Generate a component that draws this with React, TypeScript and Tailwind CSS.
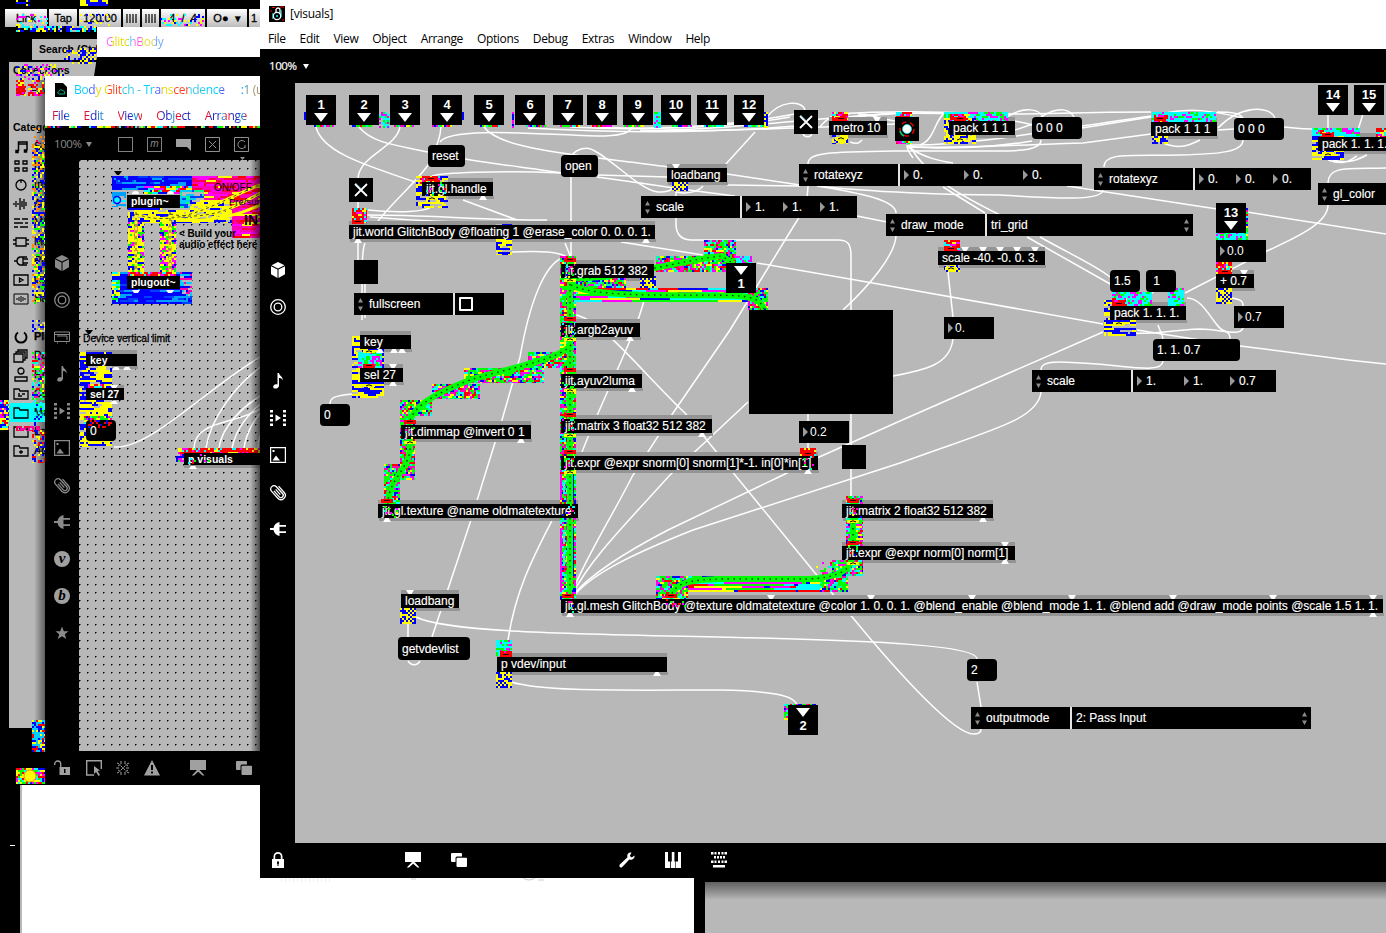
import React from "react";

type Box = [number, number, number, number];

const ALL = ["#ff0000", "#00ff00", "#0000ff", "#ffff00", "#ff00ff", "#00ffff"];
const MULTI = [...ALL, "#00ff00", "#00ff00", "#ff00b4", "#00ffb4"];
const YB = ["#ffff00", "#ffff00", "#0000ff", "#ffff00", "#0000ff", "#b8b8b8"];
const CHECK = ["#ffff00", "#0000ff"];
const BLUE = ["#0000ff", "#0000ff", "#0000ff", "#0000ff", "#0040ff", "#00a0ff"];
const PINK = ["#ff00b4", "#ff0050", "#ff00ff", "#ff0000", "#ff00b4", "#ffff00"];
const RED = ["#ff0000", "#ff0000", "#ff0000", "#ffff00", "#ff00ff", "#00ffff"];
const CYAN = ["#00ffff", "#00ffff", "#00ffff", "#ff00ff", "#00ff00"];
const ROWS = ["#ff0000", "#ffff00", "#0000ff", "#00ffff", "#ff00ff", "#00ff00"];

function Noise({ b, p = MULTI, run = 0.2, density = 1, cell = 2 }: { b: Box; p?: string[]; run?: number; density?: number; cell?: number }) {
  const [x, y, w, h] = b;
  let s = (x * 7919 + y * 104729 + w * 31 + h) >>> 0;
  const rnd = () => {
    s = (Math.imul(s, 1664525) + 1013904223) >>> 0;
    return s / 4294967296;
  };
  rnd();
  const d: Record<string, string> = {};
  for (let j = 0; j < h; j += cell) {
    let last = p[Math.floor(rnd() * p.length)];
    for (let i = 0; i < w; i += cell) {
      if (p === CHECK) last = CHECK[((i + j) / cell + (rnd() < 0.25 ? 1 : 0)) % 2 | 0];
      else if (rnd() > run) last = p[Math.floor(rnd() * p.length)];
      if (rnd() > density) continue;
      d[last] = (d[last] || "") + `M${x + i} ${y + j}h${Math.min(cell, w - i)}v${Math.min(cell, h - j)}h-${Math.min(cell, w - i)}z`;
    }
  }
  return (
    <g shapeRendering="crispEdges">
      {Object.keys(d).map((c) => (
        <path key={c} fill={c} d={d[c]} />
      ))}
    </g>
  );
}

const at = (x: number, y: number, w?: number, h?: number) => ({ left: x, top: y, width: w, height: h });

function Obj({ b, t, small }: { b: Box; t: string; small?: boolean }) {
  return (
    <div
      className={
        "absolute bg-black pl-1 whitespace-pre text-white " +
        (small ? "text-[10.5px] leading-[12px] font-bold" : "text-[12px] leading-[14px] [-webkit-text-stroke:0.15px_white]")
      }
      style={at(...b)}
    >
      {t}
    </div>
  );
}

function Msg({ b, t }: { b: Box; t: string }) {
  return (
    <div className="absolute flex items-center rounded-[4px] bg-black pl-1 text-[12px] leading-[14px] whitespace-pre text-white [-webkit-text-stroke:0.15px_white]" style={at(...b)}>
      {t}
    </div>
  );
}

function Tri() {
  return (
    <svg className="mr-[2px] h-[10px] w-[5px] shrink-0" viewBox="0 0 5 10">
      <path d="M0 0L5 5L0 10z" fill="#9a9a9a" />
    </svg>
  );
}

function Num({ b, t }: { b: Box; t: string }) {
  return (
    <div className="absolute flex items-center bg-black pl-1 text-[12px] leading-[14px] text-white" style={at(...b)}>
      <Tri />
      {t}
    </div>
  );
}

function Port({ x, y, t, out }: { x: number; y: number; t: string; out?: boolean }) {
  const tri = (
    <svg className="h-[9px] w-[14px]" viewBox="0 0 14 9">
      <path d="M0 0H14L7 9z" fill="#fff" />
    </svg>
  );
  return (
    <div className="absolute flex h-[30px] w-[30px] flex-col items-center justify-between bg-black py-[3px] text-[13px] leading-[13px] font-bold text-white" style={at(x, y)}>
      {out ? tri : <span>{t}</span>}
      {out ? <span>{t}</span> : tri}
    </div>
  );
}

function Spin() {
  return (
    <svg className="h-[13px] w-[5px] shrink-0" viewBox="0 0 5 13">
      <path d="M0 4.500L2.500 0L5 4.500zM0 8.500L2.500 13L5 8.500z" fill="#8a8a8a" />
    </svg>
  );
}

function Attr({ x, y, w, name, vals, gaps, menu, check }: { x: number; y: number; w: number; name: string; vals?: string[]; gaps?: number[]; menu?: string; check?: boolean }) {
  return (
    <div className="absolute flex h-[22px] items-stretch text-[12px] text-white [-webkit-text-stroke:0.15px_white]" style={at(x, y, w)}>
      <div className="flex w-[99px] shrink-0 items-center gap-[6px] bg-black pl-1">
        <Spin />
        {name}
      </div>
      <div className="w-[2px] shrink-0 bg-[#e4e4e4]" />
      <div className="flex min-w-0 flex-1 items-center bg-black pl-1">
        {vals?.map((v, i) => (
          <span key={i} className="flex shrink-0 items-center gap-[2px]" style={{ width: gaps ? gaps[i] : 37 }}>
            <Tri />
            {v}
          </span>
        ))}
        {menu && (
          <>
            <span className="flex-1">{menu}</span>
            <span className="mr-1 flex">
              <Spin />
            </span>
          </>
        )}
        {check && <span className="h-[14px] w-[14px] rounded-[1px] border-2 border-white" />}
      </div>
    </div>
  );
}

function Toggle({ x, y }: { x: number; y: number }) {
  return (
    <svg className="absolute h-6 w-6 bg-black" style={at(x, y)} viewBox="0 0 24 24">
      <path d="M6 6L18 18M18 6L6 18" stroke="#fff" strokeWidth="1.800" />
      <path d="M6.500 5L12.500 11" stroke="#6cf" strokeWidth=".7" />
    </svg>
  );
}

const wires = [
  "M316 127C322 152 365 165 415 182",
  "M359 127C372 143 395 145 428 152M465 159C500 165 540 169 562 173M597 177L640 183C700 192 720 194 735 196M857 216L887 222",
  "M400 127C396 148 360 155 358 178M358 202V212",
  "M441 127C440 142 434 150 428 165C418 180 395 200 378 221",
  "M440 142C450 125 560 136 605 136C625 135 630 132 632 127",
  "M484 127C500 150 580 155 668 167M727 174L800 185",
  "M817 186C870 192 950 195 1000 195C1050 198 1102 202 1103 190",
  "M528 128C600 132 700 134 795 126",
  "M570 127C640 131 730 128 790 117",
  "M600 127C670 131 740 124 795 114M640 130C700 132 820 118 895 113M660 131C740 131 800 128 895 124",
  "M755 132L725 165",
  "M767 117C780 100 802 100 805 110M803 134C805 138 812 138 812 132",
  "M572 155C577 149 587 146 593 150C613 160 640 190 658 192C668 192 672 190 672 188",
  "M432 176C440 173 500 170 561 173M597 175L668 177M727 185L800 186",
  "M571 177V260M565 243L571 258",
  "M512 252C540 251 560 251 568 258",
  "M368 210C400 213 425 212 431 207M367 215C430 215 480 220 547 220M463 200L517 220M370 217C430 222 500 224 560 224",
  "M621 242L703 255M757 263L867 282L1103 324M1137 330L1200 340M1240 346C1290 352 1340 360 1386 364",
  "M808 164C808 152 830 152 900 151H1000C1020 151 1041 150 1041 140",
  "M808 186C807 210 800 215 790 232L730 330L673 413L633 475C610 520 590 550 572 592",
  "M817 186C860 193 896 200 896 213M896 236C895 255 870 285 843 310M748 402L670 475C620 530 590 560 572 595",
  "M676 192V224C676 236 682 240 692 240H838C848 240 851 244 851 256V445M851 469V498",
  "M676 192C690 195 700 190 703 186",
  "M648 283C640 330 610 380 582 452C560 520 520 560 508 640",
  "M1104 167C1104 152 1130 156 1180 155C1220 154 1243 152 1243 140",
  "M1067 186L1217 209M1247 212L1386 234",
  "M907 145C907 150 910 154 913 158M943 187L985 213M1027 237L1112 285",
  "M909 145C930 180 960 195 1000 215M1040 237C1070 254 1095 265 1110 277",
  "M908 147C925 158 940 161 953 163M907 146C940 150 990 148 1032 141M920 145C935 140 935 118 945 113",
  "M910 147C960 148 1020 145 1083 143L1151 134M910 145C970 146 1050 130 1151 116",
  "M834 114C900 110 940 112 1007 114C1050 114 1080 112 1151 112M850 118C900 110 980 112 1033 125",
  "M1007 117C1025 105 1040 110 1043 117M1041 117C1060 105 1070 110 1074 117M1082 128L1151 117M1000 135L1033 124",
  "M850 142C858 145 860 142 862 140M820 127C830 114 840 113 850 114M858 114C870 113 870 117 895 121",
  "M1163 143C1180 150 1190 145 1200 140M1218 128C1240 105 1270 105 1275 118M1217 112C1232 112 1240 113 1243 118M1165 113C1190 108 1210 110 1243 118M1218 130L1234 129M1283 127C1295 128 1300 129 1313 129",
  "M1328 114V130M1363 114L1358 130M1333 160C1350 165 1360 158 1367 155M1328 160C1345 166 1350 160 1357 156",
  "M1328 183C1328 165 1350 169 1386 168M1328 205C1328 225 1290 240 1265 252L1185 293",
  "M1232 298C1243 300 1243 302 1243 306M1243 328C1240 337 1220 329 1200 329C1170 330 1150 335 1133 333",
  "M1187 298C1205 298 1215 330 1225 331C1230 333 1230 336 1230 340M1158 325C1160 332 1163 334 1163 340",
  "M1130 300L1137 304M1155 290L1150 295",
  "M1163 361C1162 376 1120 363 1060 362C1045 362 1041 365 1041 370M1041 392C1038 420 990 430 900 463L693 530C630 555 590 575 573 597",
  "M1103 332L1000 377L900 421L817 458L783 475L668 530C620 555 590 575 573 595",
  "M948 272L953 317M953 339C950 365 925 370 893 376",
  "M808 414V421M808 443V450",
  "M575 315C600 318 640 370 685 413L735 475L815 573L853 618C900 675 955 735 974 734C980 734 981 731 981 729",
  "M977 682L981 707M416 617C450 634 600 634 760 638C870 641 977 645 977 659",
  "M408 622V637M432 637L440 613L470 523L502 420L520 357C530 300 545 265 562 258M408 661C412 667 418 665 420 661",
  "M511 682C545 692 620 690 720 690C770 691 796 695 797 706",
  "M365 243C362 250 362 260 362 320M358 243V260M365 284V318M352 394C335 396 330 397 330 404",
];

const cables = [
  "M570 260V590",
  "M571 285C600 300 700 293 740 296C755 298 760 300 764 309",
  "M571 278C620 280 680 260 722 256L734 264",
  "M571 345C560 360 500 370 470 380C430 395 411 410 410 422V450C408 470 388 480 388 504",
  "M853 498V552C853 570 840 577 810 579H720C690 580 676 582 671 596",
];

const blocks: { b: Box; p?: string[]; run?: number; density?: number }[] = [
  { b: [560, 256, 16, 344] },
  { b: [576, 288, 192, 14], p: ROWS, run: 0.93 },
  { b: [576, 276, 50, 12] },
  { b: [656, 256, 80, 16] },
  { b: [704, 240, 32, 16] },
  { b: [736, 256, 16, 8], p: CYAN },
  { b: [748, 288, 20, 22] },
  { b: [640, 276, 16, 12], p: CHECK },
  { b: [528, 352, 34, 16] },
  { b: [464, 368, 80, 15] },
  { b: [432, 384, 48, 15] },
  { b: [400, 400, 32, 16] },
  { b: [400, 416, 15, 64] },
  { b: [384, 464, 16, 48] },
  { b: [846, 496, 17, 80] },
  { b: [832, 560, 24, 16] },
  { b: [656, 576, 32, 24] },
  { b: [688, 576, 144, 16], p: ROWS, run: 0.93 },
  { b: [820, 576, 28, 16] },
  { b: [816, 560, 16, 16], density: 0.35 },
  { b: [352, 336, 32, 62], p: YB, run: 0.65 },
  { b: [358, 352, 24, 16], p: CYAN },
  { b: [416, 176, 32, 32], p: YB, run: 0.6 },
  { b: [420, 176, 20, 8], p: RED },
  { b: [352, 208, 15, 15], p: RED },
  { b: [496, 224, 16, 31], p: YB, run: 0.6 },
  { b: [672, 182, 16, 9], p: CHECK },
  { b: [832, 112, 16, 11], p: RED },
  { b: [832, 135, 16, 9], p: YB },
  { b: [896, 112, 16, 5], p: RED },
  { b: [896, 141, 16, 3] },
  { b: [944, 112, 64, 10], p: CYAN },
  { b: [944, 118, 32, 26], p: YB },
  { b: [950, 114, 20, 8], p: RED },
  { b: [1152, 112, 64, 11], p: CYAN },
  { b: [1154, 115, 14, 8], p: RED },
  { b: [1152, 136, 16, 8], p: YB },
  { b: [1312, 128, 48, 11], p: CYAN },
  { b: [1376, 128, 10, 9], p: RED },
  { b: [1312, 136, 32, 24], p: YB, run: 0.6 },
  { b: [1320, 130, 14, 8], p: RED },
  { b: [944, 240, 16, 11], p: RED },
  { b: [944, 264, 16, 8], p: YB },
  { b: [1216, 232, 32, 8], p: CYAN },
  { b: [1246, 208, 2, 32] },
  { b: [1216, 262, 16, 12], p: RED },
  { b: [1216, 288, 16, 16], p: CHECK },
  { b: [1104, 300, 32, 36], p: YB, run: 0.6 },
  { b: [1112, 292, 40, 14], p: CYAN },
  { b: [1112, 298, 15, 8], p: RED },
  { b: [1168, 288, 16, 18], p: CYAN },
  { b: [800, 448, 16, 8], p: RED },
  { b: [400, 608, 16, 16], p: CHECK },
  { b: [496, 640, 16, 16], p: CYAN },
  { b: [500, 651, 12, 5], p: RED },
  { b: [496, 672, 16, 16], p: CHECK },
  { b: [784, 704, 32, 16] },
  { b: [379, 112, 11, 16], p: CYAN, density: 0.7 },
  { b: [304, 112, 2, 8], p: ["#0000ff"] },
  { b: [462, 112, 2, 8], p: ["#0000ff"] },
  { b: [512, 112, 2, 16], p: ["#0000ff", "#ff00ff"] },
  { b: [654, 112, 7, 16], p: CYAN },
  { b: [764, 112, 4, 16], p: ["#ffff00", "#0000ff"] },
  ...[314, 352, 394, 432, 480, 526, 560, 592, 624, 672, 704, 744].map((x) => ({ b: [x, 125, 20, 2] as Box })),
];

const overlays: Box[] = [
  [562, 264, 13, 14], [562, 323, 13, 14], [562, 374, 13, 14], [562, 419, 13, 14], [562, 456, 13, 14],
  [403, 425, 12, 14], [384, 504, 14, 14], [848, 504, 14, 14], [848, 546, 14, 14], [564, 599, 10, 14],
  [662, 599, 24, 8], [426, 182, 20, 14], [804, 456, 12, 14], [562, 504, 13, 14],
];

const outlets: [number, number, boolean][] = [
  [483, 196, false], [646, 239, false], [358, 239, false], [630, 337, false], [632, 388, false], [702, 433, false], [808, 470, false],
  [521, 439, false], [387, 518, false], [983, 518, false], [1005, 560, false], [657, 672, false], [570, 613, false], [394, 349, false], [402, 349, false], [380, 349, false],
  [393, 382, false], [1373, 613, false],
  [676, 164, true], [877, 117, true], [965, 247, true], [983, 247, true], [1000, 247, true], [1017, 247, true], [1035, 247, true], [1244, 270, true],
  [393, 364, true], [410, 590, true], [771, 595, true], [871, 595, true], [972, 595, true], [1072, 595, true], [1173, 595, true], [1273, 595, true], [1373, 595, true], [1005, 542, true],
];

const objs: [Box, string][] = [
  [[422, 182, 71, 14], "jit.gl.handle"],
  [[349, 225, 306, 14], "jit.world GlitchBody @floating 1 @erase_color 0. 0. 0. 1."],
  [[667, 168, 60, 14], "loadbang"],
  [[829, 121, 58, 14], "metro 10"],
  [[949, 121, 66, 14], "pack 1 1 1"],
  [[1151, 122, 66, 14], "pack 1 1 1"],
  [[1318, 137, 80, 14], "pack 1. 1. 1."],
  [[938, 251, 107, 14], "scale -40. -0. 0. 3."],
  [[1216, 274, 38, 14], "+ 0.7"],
  [[1110, 306, 76, 14], "pack 1. 1. 1."],
  [[561, 264, 93, 14], "jit.grab 512 382"],
  [[561, 323, 79, 14], "jit.argb2ayuv"],
  [[561, 374, 81, 14], "jit.ayuv2luma"],
  [[561, 419, 151, 14], "jit.matrix 3 float32 512 382"],
  [[561, 456, 257, 14], "jit.expr @expr snorm[0] snorm[1]*-1. in[0]*in[1]"],
  [[842, 504, 151, 14], "jit.matrix 2 float32 512 382"],
  [[842, 546, 173, 14], "jit.expr @expr norm[0] norm[1]"],
  [[401, 425, 130, 14], "jit.dimmap @invert 0 1"],
  [[378, 504, 200, 14], "jit.gl.texture @name oldmatetexture"],
  [[561, 599, 822, 14], "jit.gl.mesh GlitchBody @texture oldmatetexture @color 1. 0. 0. 1. @blend_enable @blend_mode 1. 1. @blend add @draw_mode points @scale 1.5 1. 1."],
  [[401, 594, 58, 14], "loadbang"],
  [[497, 657, 170, 15], "p vdev/input"],
  [[360, 335, 51, 14], "key"],
  [[360, 368, 43, 14], "sel 27"],
];

const msgs: [Box, string][] = [
  [[428, 145, 37, 22], "reset"],
  [[561, 155, 37, 22], "open"],
  [[1032, 117, 50, 22], "0 0 0"],
  [[1234, 118, 50, 22], "0 0 0"],
  [[1110, 270, 30, 22], "1.5"],
  [[1146, 270, 30, 22], " 1"],
  [[1153, 339, 87, 22], "1. 1. 0.7"],
  [[320, 404, 30, 22], "0"],
  [[398, 637, 72, 23], "getvdevlist"],
  [[967, 659, 30, 22], "2"],
];

const nums: [Box, string][] = [
  [[944, 317, 50, 22], "0."],
  [[799, 421, 50, 22], "0.2"],
  [[1216, 240, 50, 22], "0.0"],
  [[1234, 306, 50, 22], "0.7"],
];

const ports = [306, 349, 390, 432, 474, 515, 553, 587, 623, 661, 697, 734];

const redInlets = [[570, 258], [570, 317], [570, 368], [570, 413], [570, 450], [410, 420], [387, 499], [853, 499], [853, 541], [568, 594], [671, 594], [358, 220], [431, 177], [841, 117], [960, 117], [1160, 117], [1328, 133], [951, 247], [1225, 270], [1119, 302], [808, 452], [506, 653], [369, 364]];
const yellowOutlets = [[570, 279], [570, 338], [570, 389], [570, 434], [570, 471], [369, 350], [369, 384], [432, 197], [841, 137], [960, 138], [1328, 153], [951, 267], [1119, 322], [410, 441], [853, 520], [853, 562]];

function PatchCanvas() {
  return (
    <div className="relative flex-1 overflow-hidden bg-[#b8b8b8]">
      <div className="absolute -top-[83px] -left-[295px] h-[933px] w-[1386px]">
        <svg className="absolute inset-0 h-full w-full" viewBox="0 0 1386 933">
          <g fill="none" stroke="#fff" strokeWidth="1.5">
            {wires.map((d, i) => (
              <path key={i} d={d} />
            ))}
          </g>
          {objs.map(([[x, y, w, h]], i) => (
            <path key={i} fill="#949494" d={`M${x} ${y - 4}h${w}v4h-${w}zM${x + 1} ${y + h}h${w}v3h-${w}z`} />
          ))}
          {blocks.map((k, i) => (
            <Noise key={i} {...k} />
          ))}
          <path d="M561 474V500M561 528V592" stroke="#f0f" strokeWidth="2" />
          <path d="M573 474V500M573 528V575" stroke="#00f" strokeWidth="2" />
          <path d="M564 480V500M564 530V575" stroke="#0ff" strokeWidth="2" strokeDasharray="14 8" />
          {cables.map((d, i) => (
            <g key={i} fill="none">
              <path d={d} stroke="#00ff00" strokeWidth="6" />
              <path d={d} stroke="#003000" strokeWidth="1.4" strokeDasharray="1.5 4.5" />
            </g>
          ))}
        </svg>
        {objs.map(([b, t], i) => (
          <Obj key={i} b={b} t={t} />
        ))}
        <svg className="absolute inset-0 h-full w-full" viewBox="0 0 1386 933">
          {overlays.map((b, i) => (
            <Noise key={i} b={b} density={0.22} />
          ))}
          {outlets.map(([x, y, top], i) => (
            <path key={i} fill="#fff" d={top ? `M${x - 4} ${y}h8l-2.5 4h-3z` : `M${x - 4} ${y + 4}h8l-2.5 -4h-3z`} />
          ))}
          {redInlets.map(([x, y]) => (
            <g key={x + "-" + y}>
              <path d={`M${x - 6} ${y}h12v4h-12z`} fill="#f00" />
              <path d={`M${x - 3} ${y + 1.5}h6`} stroke="#300" />
            </g>
          ))}
          {yellowOutlets.map(([x, y]) => (
            <g key={x + "-" + y}>
              <path d={`M${x - 6} ${y}h12v3h-12z`} fill="#ff0" />
              <path d={`M${x - 3} ${y + 2}q3 -2.5 6 0`} stroke="#000" fill="none" />
            </g>
          ))}
        </svg>
        {ports.map((x, i) => (
          <Port key={x} x={x} y={95} t={String(i + 1)} />
        ))}
        <Port x={1318} y={85} t="14" />
        <Port x={1354} y={85} t="15" />
        <Port x={1216} y={203} t="13" />
        <Port x={726} y={263} t="1" out />
        <Port x={788} y={705} t="2" out />
        {msgs.map(([b, t], i) => (
          <Msg key={i} b={b} t={t} />
        ))}
        {nums.map(([b, t], i) => (
          <Num key={i} b={b} t={t} />
        ))}
        <Attr x={641} y={196} w={216} name="scale" vals={["1.", "1.", "1."]} />
        <Attr x={799} y={164} w={283} name="rotatexyz" vals={["0.", "0.", "0."]} gaps={[60, 59, 50]} />
        <Attr x={1094} y={168} w={217} name="rotatexyz" vals={["0.", "0.", "0."]} />
        <Attr x={886} y={214} w={307} name="draw_mode" menu="tri_grid" />
        <Attr x={1318} y={183} w={120} name="gl_color" />
        <Attr x={1032} y={370} w={244} name="scale" vals={["1.", "1.", "0.7"]} gaps={[47, 46, 40]} />
        <Attr x={354} y={293} w={150} name="fullscreen" check />
        <Attr x={971} y={707} w={340} name="outputmode" menu="2: Pass Input" />
        <Toggle x={349} y={178} />
        <Toggle x={794} y={110} />
        <svg className="absolute h-6 w-6 bg-black" style={at(895, 117)} viewBox="0 0 24 24">
          <circle cx="12" cy="12" r="7" fill="none" stroke="#d00" strokeWidth="1.6" strokeDasharray="5 4" />
          <path d="M5 14a7 7 0 0 0 4 5" stroke="#0c6" strokeWidth="1.5" fill="none" />
          <circle cx="12" cy="12" r="4.5" fill="#fff" stroke="#0ff" strokeWidth=".7" />
        </svg>
        <div className="absolute bg-black" style={at(354, 260, 24, 24)} />
        <div className="absolute bg-black" style={at(842, 445, 24, 24)} />
        <div className="absolute bg-black" style={at(749, 310, 144, 104)} />
      </div>
    </div>
  );
}

const icons: Record<string, React.ReactNode> = {
  cube: <path fill="currentColor" d="M8 0L14.5 3.2L8 6.5L1.500 3.2zM1 4.200L7.500 7.500V16L1 12.300zM15 4.200L8.500 7.500V16L15 12.300z" />,
  target: (
    <g fill="none" stroke="currentColor" strokeWidth="1.3">
      <circle cx="8" cy="8" r="7.300" />
      <circle cx="8" cy="8" r="3.800" />
    </g>
  ),
  panel: <path fill="none" stroke="currentColor" strokeWidth="1" d="M.5 3h15v9.500h-15zM.5 5.500h15M3 7h10v4M3 14h1M12 14h1" />,
  note: <path fill="currentColor" d="M7.500 0H9C9.200 2.500 13 3.500 12.800 7.500C12 5.500 10.500 5 9 5V12.500C9 14.800 6.500 16 4.600 15.500C2.500 14.800 3 12.300 5 11.500C6 11 7 11.100 7.500 11.400z" />,
  film: <path fill="currentColor" d="M0 0h3v2.500H0zM0 4.500h3V7H0zM0 9h3v2.500H0zM0 13.500h3V16H0zM13 0h3v2.500h-3zM13 4.500h3V7h-3zM13 9h3v2.500h-3zM13 13.500h3V16h-3zM5.500 4.500L11 8L5.500 11.500z" />,
  image: (
    <>
      <path fill="none" stroke="currentColor" strokeWidth="1.200" d="M.6.6h14.800v14.800H.6z" />
      <path fill="currentColor" d="M2.500 13.500L6 8.500L10 13.500zM2.500 3h2v2h-2z" />
    </>
  ),
  clip: (
    <g transform="rotate(-42 8 8)">
      <path fill="none" stroke="currentColor" strokeWidth="1.300" d="M5.700 4.500V12.500C5.700 15.300 10.300 15.300 10.300 12.500V3C10.300-1.200 3.700-1.200 3.700 3V12.500C3.700 18 12.300 18 12.300 12.500V4M8 4.500V11.500" />
    </g>
  ),
  plug: <path fill="currentColor" d="M0 7h3.500C4 4 6.500 1.500 9.500 1V4H16v1.800H9.500v4.400H16V12H9.500V15C6.500 14.500 4 12 3.500 9H0z" />,
  star: <path fill="currentColor" d="M8 1.500L9.800 6.200L14.500 6.300L10.800 9.300L12.200 14L8 11.300L3.800 14L5.200 9.300L1.500 6.300L6.200 6.200z" />,
  lock: <path fill="currentColor" fillRule="evenodd" d="M2 7h1.500V4.500a4.500 4.500 0 0 1 9 0V7H14v9H2zM5.200 7h5.600V4.500a2.800 2.800 0 0 0-5.600 0zM7 9.500v2l.5.800V14h1v-1.700l.5-.8v-2z" />,
  unlock: (
    <>
      <path fill="none" stroke="currentColor" strokeWidth="1.300" d="M.7 5V4a3 3 0 0 1 6 0V8" />
      <path fill="currentColor" fillRule="evenodd" d="M5.500 7H16v8H5.500zM10 9v4h1.500V9z" />
    </>
  ),
  easel: <path fill="currentColor" d="M0 0h16v10H0zM7 10h2.500L14.500 15.500H12.500L8.200 11.800L4 15.500H1.800z" />,
  layers: <path fill="currentColor" d="M1 1h9a1 1 0 0 1 1 1v2.500H6a1.500 1.500 0 0 0-1.500 1.500v4H1a1 1 0 0 1-1-1V2a1 1 0 0 1 1-1zM6.500 5.800H15a1 1 0 0 1 1 1V14a1 1 0 0 1-1 1H6.500a1 1 0 0 1-1-1V6.800a1 1 0 0 1 1-1z" />,
  wrench: <path fill="currentColor" d="M12.500.5C10 0 7.500 2 8.500 5.200L.8 12.500C-.6 14 1.500 16.800 3.300 15L10.300 7.500C13 8.500 16 6.500 15.500 3.500L12.800 5.500L10.800 4z" />,
  keys: <path fill="currentColor" fillRule="evenodd" d="M0 0h3v9.500h2V16H0zM6.800 0h2.600v9.500h1V16H5.800V9.500h1zM13 0h3v16h-5V9.500h2z" />,
  keyboard: <path fill="currentColor" d="M0 0h2.500v2.500H0zM3.500 0h2v2.500h-2zM7 0h2v2.500H7zM10.500 0h2v2.500h-2zM13.500 0H16v2.500h-2.500zM3 4h2v2.500H3zM6 4h2v2.500H6zM9 4h2v2.500H9zM12 4h2v2.500h-2zM0 8.500h2.500V11H0zM3.500 8.500h2V11h-2zM7 8.500h2V11H7zM10.500 8.500h2V11h-2zM13.500 8.500H16V11h-2.500zM2 13h12v2.500H2z" />,
  select: (
    <>
      <path fill="none" stroke="currentColor" strokeWidth="1.400" d="M8 15H.7V.7h14.600V9" />
      <path fill="currentColor" d="M8 6l6 4.500l-2.500.5l2.500 4l-1.500 1l-2.500-4l-2 2z" />
    </>
  ),
  snow: <path fill="none" stroke="currentColor" strokeWidth="1" strokeDasharray="3 .8" d="M6 1v3l-3 2M10 1v3l3 2M6 15v-3l-3-2M10 15v-3l3-2M1 8h4M11 8h4M5.500 5.500l5 5M10.500 5.500l-5 5M2 3l2 1M14 3l-2 1M2 13l2-1M14 13l-2-1" />,
  warn: <path fill="currentColor" fillRule="evenodd" d="M8 0L16 15.500H0zM7 5v5h2V5zM7 11.500V13.500h2V11.500z" />,
};

function Icon({ n, c = "" }: { n: string; c?: string }) {
  return (
    <svg className={"h-4 w-4 shrink-0 overflow-visible " + c} viewBox="0 0 16 16">
      {icons[n]}
    </svg>
  );
}

function Disc({ t }: { t: string }) {
  return (
    <span className="flex h-4 w-4 items-center justify-center rounded-full bg-[#a0a0a0] font-['Liberation_Serif',serif] text-[15px] leading-none font-bold text-black italic">
      {t}
    </span>
  );
}

function Rail({ items, c }: { items: string[]; c: string }) {
  return (
    <>
      {items.map((n, i) => (
        <div key={i} className={"flex h-[37px] items-center justify-center " + c}>
          {n === "" ? null : n.length === 1 ? <Disc t={n} /> : <Icon n={n} />}
        </div>
      ))}
    </>
  );
}

function AppIcon() {
  return (
    <svg className="h-4 w-4 shrink-0" viewBox="0 0 16 16">
      <path d="M0 0h16v16H0z" fill="#000" />
      <path d="M3 1.500h3M11 1h4M1 5h2M13 14h2" stroke="#f00" />
      <path d="M7 7V4a2 2 0 0 1 4 0V8" stroke="#fff" fill="none" strokeWidth="1.300" />
      <circle cx="8" cy="10" r="3.700" fill="none" stroke="#fff" strokeWidth="1.300" />
      <circle cx="8" cy="10" r="1.100" fill="#0ee" />
      <path d="M3.500 7v6M12.500 4v7" stroke="#0cc" strokeWidth=".8" />
    </svg>
  );
}

function MainWindow() {
  return (
    <section className="absolute top-0 left-[260px] flex h-[878px] w-[1126px] flex-col bg-black">
      <header className="flex h-[27px] items-center gap-[5px] bg-white pl-[9px] font-['Open_Sans','Noto_Sans',sans-serif] text-[12px] tracking-[-0.25px] text-black">
        <AppIcon />
        <span>[visuals]</span>
      </header>
      <nav className="flex h-[22px] items-center gap-[14px] bg-white pt-[2px] pl-2 font-['Open_Sans','Noto_Sans',sans-serif] text-[12px] leading-none tracking-[-0.35px] text-black">
        {["File", "Edit", "View", "Object", "Arrange", "Options", "Debug", "Extras", "Window", "Help"].map((m) => (
          <span key={m}>{m}</span>
        ))}
      </nav>
      <div className="flex h-[34px] items-center gap-[6px] pl-[9px] font-['Open_Sans','Noto_Sans',sans-serif] text-[11.5px] tracking-[-0.4px] text-white [-webkit-text-stroke:0.2px_white]">
        100%
        <svg className="h-[5px] w-[6px]" viewBox="0 0 6 5">
          <path d="M0 0H6L3 5z" fill="#fff" />
        </svg>
      </div>
      <div className="flex min-h-0 flex-1">
        <aside className="w-[35px] shrink-0 pt-[168px]">
          <Rail items={["cube", "target", "", "note", "film", "image", "clip", "plug"]} c="text-white" />
        </aside>
        <PatchCanvas />
      </div>
      <footer className="flex h-[35px] shrink-0 items-center pb-[2px] pl-[10px] text-white">
        <Icon n="lock" />
        <Icon n="easel" c="ml-[119px]" />
        <Icon n="layers" c="ml-[30px]" />
        <Icon n="wrench" c="ml-[152px]" />
        <Icon n="keys" c="ml-[30px]" />
        <Icon n="keyboard" c="ml-[30px]" />
      </footer>
    </section>
  );
}

function BodyWindow() {
  return (
    <section className="absolute top-[76px] left-[45px] flex h-[709px] w-[215px] flex-col overflow-hidden bg-black">
      <header className="flex h-[28px] shrink-0 items-center bg-white pl-[9px] font-['Open_Sans','Noto_Sans',sans-serif] text-[12px] tracking-[-0.3px] whitespace-pre">
        <svg className="mr-[6px] h-[14px] w-[14px] shrink-0" viewBox="0 0 14 14">
          <path d="M1 0h8l4 4v10H1z" fill="#000" />
          <path d="M3.500 10l3-3.500l4 2v2.500H5z" fill="none" stroke="#0a8" />
        </svg>
        <span className="bg-[repeating-linear-gradient(90deg,#00d0ff_0_14px,#5060ff_14px_22px,#e8d800_22px_34px,#ff4020_34px_48px,#30c8e8_48px_66px)] bg-clip-text text-transparent">
          Body Glitch - Transcendence
        </span>
        <span className="ml-4 bg-[linear-gradient(90deg,#00a0ff_0_6px,#a09060_6px_40px)] bg-clip-text text-transparent">:1 (u</span>
      </header>
      <nav className="flex h-[22px] shrink-0 items-center gap-[14px] bg-white pt-[2px] pl-[7px] font-['Open_Sans','Noto_Sans',sans-serif] text-[12px] leading-none tracking-[-0.35px]">
        {["File", "Edit", "View", "Object", "Arrange"].map((m) => (
          <span key={m} className="bg-[repeating-linear-gradient(90deg,#e01030_0_5px,#2020c0_5px_14px,#2080d0_14px_20px)] bg-clip-text py-1 text-transparent">
            {m}
          </span>
        ))}
      </nav>
      <svg className="h-[2px] w-full shrink-0" viewBox="0 0 215 2" preserveAspectRatio="none">
        <Noise b={[0, 0, 215, 2]} p={["#f00", "#0ff", "#00f", "#0f0", "#000", "#000", "#ff0"]} />
      </svg>
      <div className="flex h-[32px] shrink-0 items-center pl-[9px] text-[#8a8a8a]">
        <span className="w-[28px] font-['Open_Sans',sans-serif] text-[11.5px] tracking-[-0.4px]">100%</span>
        <svg className="ml-1 h-[5px] w-[6px]" viewBox="0 0 6 5">
          <path d="M0 0H6L3 5z" fill="#8a8a8a" />
        </svg>
        <span className="ml-[26px] h-[15px] w-[15px] border border-[#808080]" />
        <span className="ml-[14px] flex h-[15px] w-[15px] items-center justify-center border border-[#808080] text-[10px] leading-none italic">m</span>
        <svg className="ml-[14px] h-[13px] w-[15px]" viewBox="0 0 15 13">
          <path d="M0 1h15v12l-4-4H0z" fill="#a0a0a0" />
        </svg>
        <svg className="ml-[14px] h-[15px] w-[15px]" viewBox="0 0 15 15">
          <path d="M.5.5h14v14H.5zM4 4l7 7M11 4l-7 7" fill="none" stroke="#909090" />
        </svg>
        <svg className="ml-[14px] h-[15px] w-[15px] overflow-visible" viewBox="0 0 15 15">
          <path d="M.5.5h14v14H.5zM11 5a4 4 0 1 0 0 5M11 8v3" fill="none" stroke="#909090" />
          <path d="M6 20h5l-2.500 3z" fill="#909090" />
        </svg>
      </div>
      <div className="flex min-h-0 flex-1">
        <aside className="w-[34px] shrink-0 pt-[84px]">
          <Rail items={["cube", "target", "panel", "note", "film", "image", "clip", "plug", "v", "b", "star"]} c="text-[#8a8a8a]" />
        </aside>
        <BodyCanvas />
      </div>
      <footer className="flex h-[34px] shrink-0 items-center pl-[9px] text-[#a0a0a0]">
        <Icon n="unlock" />
        <Icon n="select" c="ml-[16px]" />
        <Icon n="snow" c="ml-[13px]" />
        <Icon n="warn" c="ml-[13px]" />
        <Icon n="easel" c="ml-[30px]" />
        <Icon n="layers" c="ml-[30px]" />
      </footer>
    </section>
  );
}

function BodyCanvas() {
  return (
    <div className="relative flex-1 overflow-hidden bg-[#b8b8b8] bg-[radial-gradient(circle_at_0.5px_0.5px,#000_0.9px,transparent_1.1px)] bg-[size:8px_8px]">
      <div className="absolute -top-[160px] -left-[79px] h-[933px] w-[400px]">
        <svg className="absolute inset-0" width="400" height="933" viewBox="0 0 400 933">
          <path d="M114 171h8l-3 4h-2zM85 330h8l-3 4h-2z" fill="#000" />
          <path d="M86 350h51v4h-51zM87 366h51v3h-51zM104 385h20v4h-20zM184 465h80v3h-80z" fill="#949494" />
          <Noise b={[112, 176, 96, 14]} p={BLUE} run={0.7} />
          <Noise b={[144, 186, 56, 8]} p={ALL} run={0.6} />
          <Noise b={[192, 176, 72, 32]} p={PINK} run={0.75} />
          <Noise b={[232, 208, 32, 30]} p={PINK} run={0.8} />
          <Noise b={[112, 192, 14, 15]} p={["#00a0ff", "#0ff", "#b8b8b8"]} run={0.7} />
          <circle cx="117" cy="200" r="3.500" fill="none" stroke="#00f" strokeWidth="1.500" />
          <Noise b={[180, 190, 24, 18]} p={["#0040ff", "#0cf", "#0f8", "#b8b8b8"]} run={0.6} />
          <Noise b={[128, 208, 104, 15]} p={YB} run={0.6} />
          <Noise b={[190, 200, 40, 14]} p={YB} run={0.6} />
          <Noise b={[128, 222, 16, 50]} p={["#ff0", "#ff0", "#00f", "#0f0", "#f0f"]} run={0.3} />
          <Noise b={[160, 222, 16, 50]} p={["#ff0", "#ff0", "#00f", "#0f0", "#f0f"]} run={0.3} />
          <path d="M136 212V272M170 212V272M136 214C180 230 220 200 262 184M170 214C210 222 240 205 262 192M170 218C210 224 240 215 262 204" fill="none" stroke="#ff0" strokeWidth="3" />
          <path d="M136 212V272M170 212V272M136 214C180 230 220 200 262 184M170 214C210 222 240 205 262 192" fill="none" stroke="#222" strokeWidth=".8" strokeDasharray="3 3" />
          <Noise b={[112, 272, 80, 32]} p={BLUE} run={0.8} />
          <Noise b={[112, 272, 8, 32]} p={["#0f0", "#ff0", "#00f", "#0ff"]} run={0.6} />
          <Noise b={[180, 272, 12, 24]} p={["#f0a", "#0cf", "#b8b8b8", "#00f"]} run={0.6} />
          <Noise b={[128, 272, 48, 4]} p={RED} />
          <Noise b={[80, 352, 32, 95]} p={YB} run={0.7} />
          <Noise b={[84, 416, 28, 8]} p={MULTI} />
          <Noise b={[88, 384, 16, 5]} p={RED} />
          <path d="M194 448C195 420 235 425 262 408M206 448C210 420 235 385 262 366M219 448C222 425 245 405 262 395M232 448C236 428 250 412 262 403M244 448C246 433 255 418 262 412M258 448C258 438 262 430 264 425M114 447C150 450 210 385 262 356" stroke="#fff" strokeWidth="1.500" fill="none" />
          <Noise b={[178, 448, 84, 6]} p={RED} />
          <Noise b={[176, 454, 10, 8]} p={["#f0f", "#00f", "#b8b8b8", "#0f0"]} />
        </svg>
        <Obj b={[127, 195, 53, 13]} t="plugin~" small />
        <Obj b={[127, 276, 53, 13]} t="plugout~" small />
        <Obj b={[86, 354, 51, 12]} t="key" small />
        <Obj b={[86, 388, 38, 12]} t="sel 27" small />
        <Obj b={[184, 453, 90, 12]} t="p visuals" small />
        <Msg b={[86, 420, 30, 21]} t="0" />
        <svg className="absolute inset-0" width="400" height="933" viewBox="0 0 400 933">
          <Noise b={[88, 420, 24, 8]} p={["#f00", "#d00", "#f00", "#00f"]} density={0.6} />
          <Noise b={[188, 454, 30, 10]} density={0.06} />
          <path d="M132 194a3.500 3 0 0 1 7 0zM167 194a3.500 3 0 0 1 7 0zM132 290h8l-2 3h-4zM166 290h8l-2 3h-4zM112 370h8l-2-3h-4zM123 370h8l-2-3h-4zM110 385h8l-2 3h-4zM110 404h8l-2-3h-4zM189 469h8l-2-3h-4z" fill="#fff" />
        </svg>
        <p className="absolute text-[10px] leading-[11px] font-bold tracking-[-0.1px] whitespace-pre text-black" style={at(179, 228)}>
          {"< Build your"}
          <br />
          audio effect here
        </p>
        <p className="absolute text-[10.3px] leading-[12px] tracking-[-0.05px] whitespace-pre text-black [-webkit-text-stroke:0.3px_black]" style={at(83, 333)}>
          Device vertical limit
        </p>
        <p className="absolute text-[10px] leading-[12px] whitespace-pre text-black" style={at(214, 182)}>
          ON/OFF
        </p>
        <p className="absolute text-[9.5px] leading-[12px] whitespace-pre text-black" style={at(229, 196)}>
          Pre/sur
        </p>
        <p className="absolute text-[14px] leading-[14px] font-bold whitespace-pre text-black" style={at(244, 213)}>
          IN
        </p>
        <div className="absolute bg-gradient-to-r from-transparent to-black/60" style={at(250, 160, 10, 591)} />
      </div>
    </div>
  );
}

const rows: [string, React.ReactNode][] = [
  ["So", <path key="a" strokeWidth="1.500" d="M5.500 12V3h8.500v8.500M5.500 5H14M2.500 12.500h2.500M11 12h2.500M3 11.500h2v2H3zM11.500 11h2v2h-2z" />],
  ["Dr", <path key="a" d="M2 3h4v3H2zM10 3h4v3h-4zM2 10h4v3H2zM10 10h4v3h-4z" />],
  ["Ins", <path key="a" d="M3 8a5 5 0 1 0 10 0a5 5 0 1 0-10 0M8 3v3" />],
  ["Au", <path key="a" d="M1 7v2M3 5v6M5 7v2M7 2v12M9 5v6M11 3v10M13 6v4" />],
  ["MI", <path key="a" d="M1 4h6M9 4h6M1 8h9M12 8h3M1 12h4M7 12h8" />],
  ["Ma", <path key="a" d="M3 4h10v8H3zM0 6h3M13 6h3M0 10h3M13 10h3" />],
  ["Plu", <path key="a" d="M1 8h3M14 4H7C3 5 3 11 7 12H14M10 4v8M10 6h5M10 10h5" />],
  ["Cli", <path key="a" d="M1 3h14v10H1zM6.500 6l3.500 2l-3.500 2z" fill="none" />],
  ["Sa", <path key="a" d="M1 3h14v10H1zM4 7v2M6 6v4M8 5v6M10 6v4M12 7v2" strokeWidth="1" />],
];
const places: [string, React.ReactNode][] = [
  ["Pa", <path key="a" d="M1 6h9v8H1zM3 6V4h9v8h-2M5 4V2h9v8h-2" />],
  ["He", <path key="a" d="M5 4a3 3 0 1 0 6 0a3 3 0 1 0-6 0M2 14v-4h12v4z" />],
  ["Cu", <path key="a" d="M1 13V3h5l1 2h8v8zM5 8h2M9 8h3M5 10h4" />],
  ["Ma", <path key="a" d="M1 13V3h5l1 2h8v8z" />],
  ["Lo", <path key="a" d="M1 13V3h5l1 2h8v8z" />],
  ["Ad", <path key="a" d="M1 13V3h5l1 2h8v8zM8 7v4M6 9h4" />],
];

function BrowserRow({ t, i, sel, bold }: { t: string; i: React.ReactNode; sel?: boolean; bold?: boolean }) {
  return (
    <div className={"flex h-[19px] items-center gap-[5px] pl-1 text-[11px] [-webkit-text-stroke:0.3px_black] " + (sel ? "bg-[#00ffff]" : "") + (bold ? " font-bold" : "")}>
      <svg className="h-4 w-4 shrink-0" viewBox="0 0 16 16" fill="none" stroke="#000" strokeWidth="1.300">
        {i}
      </svg>
      {t}
    </div>
  );
}

function Bars() {
  return (
    <svg className="h-[9px] w-[11px]" viewBox="0 0 11 9">
      <path d="M1 0v9M4 0v9M7 0v9M10 0v9" stroke="#000" strokeWidth="1.200" />
    </svg>
  );
}

function Ableton() {
  const cells: [React.ReactNode, string][] = [
    ["Link", "w-[43px]"],
    ["Tap", "w-[29px]"],
    ["120.00", "w-[43px]"],
    [<Bars key="b" />, "w-[18px]"],
    [<Bars key="b" />, "w-[18px]"],
    ["4  /  4", "w-[45px]"],
    ["O●  ▾", "w-[41px]"],
    ["1 ", "w-[14px]"],
  ];
  return (
    <section className="absolute inset-0 bg-black text-black">
      <div className="flex h-[27px] items-end gap-[1px] pl-[5px]">
        {cells.map(([t, w], i) => (
          <span
            key={i}
            className={"flex h-[18px] items-center justify-center border-r border-black bg-gradient-to-b from-white to-[#bcbcbc] text-[11px] whitespace-pre [-webkit-text-stroke:0.3px_black] " + w}
          >
            {t}
          </span>
        ))}
      </div>
      <div className="mt-[12px] ml-[32px] h-[21px] w-[66px] bg-[#b8b8b8] pl-[7px] text-[10.5px] leading-[21px] font-bold whitespace-pre">Search (Ctrl</div>
      <div className="mt-[2px] ml-[9px] h-[666px] w-[36px] bg-[#b8b8b8]">
        <div className="flex h-full w-[36px] flex-col bg-gradient-to-r from-[#b8b8b8] from-70% to-[#606060]">
          <div className="h-[18px] w-[87px] bg-[#b8b8b8] pl-1 text-[10.5px] leading-[17px] font-bold">Collections</div>
          <div className="flex h-[20px] items-center gap-[5px] pl-[7px] text-[11px]">
            <span className="h-[9px] w-[9px] shrink-0 bg-red-600" />
            Fav
          </div>
          <div className="mt-[19px] h-[18px] w-[60px] pl-1 text-[10.5px] leading-[17px] font-bold">Categories</div>
          {rows.map(([t, i]) => (
            <BrowserRow key={t} t={t} i={i} />
          ))}
          <div className="h-[19px]" />
          <BrowserRow t="Pla" bold i={<path strokeWidth="2" d="M5 3.500A5.500 5.500 0 1 0 11 3.500" />} />
          {places.map(([t, i], k) => (
            <BrowserRow key={k} t={t} i={i} sel={k === 3} />
          ))}
        </div>
      </div>
      <svg className="absolute inset-0" width="300" height="800" viewBox="0 0 300 800">
        <path d="M97 57H260V76H94z" fill="#000" />
        <Noise b={[16, 0, 16, 6]} p={["#00f", "#ff0", "#000"]} run={0.5} />
        <Noise b={[80, 0, 28, 6]} p={["#00f", "#ff0"]} run={0.5} />
        <Noise b={[16, 26, 80, 6]} p={["#00f", "#ff0", "#0ff", "#000", "#b8b8b8"]} />
        <Noise b={[16, 14, 32, 14]} p={["#ff0", "#0ff", "#f0f", "#fff"]} density={0.25} />
        <Noise b={[80, 14, 32, 12]} p={["#ff0", "#ff0", "#00f"]} density={0.22} />
        <Noise b={[160, 14, 44, 12]} p={["#f0f", "#0ff", "#00f", "#ff0"]} density={0.35} />
        <Noise b={[80, 48, 16, 16]} p={CHECK} density={0.8} />
        <Noise b={[64, 50, 16, 14]} p={["#ff0", "#00f"]} density={0.3} />
        <Noise b={[16, 64, 48, 16]} p={["#ff0", "#00f", "#f0f", "#b8b8b8"]} density={0.6} />
        <Noise b={[16, 80, 28, 16]} p={["#f00", "#f00", "#ff0", "#f0f"]} density={0.5} />
        <Noise b={[32, 128, 13, 16]} p={["#f80", "#f04", "#b8b8b8"]} density={0.3} />
        <Noise b={[32, 144, 15, 160]} p={["#ff0", "#00f", "#ff0", "#00f", "#0f0", "#f80"]} density={0.55} />
        <Noise b={[32, 320, 15, 12]} p={["#00f", "#ff0", "#b8b8b8"]} density={0.7} />
        <Noise b={[32, 352, 15, 48]} density={0.55} />
        <Noise b={[0, 400, 9, 30]} p={["#f00", "#0ff", "#00f", "#ff0", "#f0f"]} />
        <Noise b={[32, 400, 15, 28]} p={["#0ff", "#0ff", "#00f", "#0f0"]} density={0.3} />
        <Noise b={[16, 426, 24, 5]} p={["#f0a", "#f04"]} density={0.7} />
        <Noise b={[32, 430, 15, 33]} p={["#ff0", "#00f", "#f00"]} density={0.5} />
        <Noise b={[32, 720, 15, 32]} p={["#00f", "#00f", "#0cf", "#0cf", "#f00", "#ff0"]} />
        <Noise b={[16, 768, 31, 16]} p={ALL} />
        <circle cx="30" cy="776" r="6" fill="#ff0" stroke="#f80" />
      </svg>
      <div className="absolute top-[785px] left-[20px] h-[148px] w-[674px] border-l-2 border-[#b8b8b8] bg-white" />
      <svg className="absolute top-[878px] left-[280px]" width="280" height="5" viewBox="0 0 280 5">
        <path d="M1 1h50M1 3h50" stroke="#dcdcdc" strokeDasharray="1 3" />
        <path d="M131 1h5M243 0q6 4 12 0M258 2h6" stroke="#ccc" fill="none" />
      </svg>
      <div className="absolute top-[845px] left-[10px] h-[1px] w-[5px] border-t border-dashed border-white" />
      <div className="absolute top-[878px] left-[694px] h-[55px] w-[11px] bg-black" />
      <div className="absolute top-[882px] left-[705px] h-[51px] w-[681px] bg-gradient-to-b from-[#606060] to-[#b8b8b8] to-35%" />
    </section>
  );
}

export default function App() {
  return (
    <main className="relative h-[933px] w-[1386px] overflow-hidden bg-black font-['Liberation_Sans',Arial,sans-serif]">
      <Ableton />
      <section className="absolute top-[27px] left-[97px] flex h-[30px] w-[163px] items-center bg-white pl-[9px] font-['Open_Sans','Noto_Sans',sans-serif] text-[12px] tracking-[-0.3px]">
        <span className="bg-[linear-gradient(90deg,#ff60ff_0_6px,#e8d800_6px_22px,#60c8e8_22px_28px,#ff60e0_28px_36px,#e8d840_36px_48px,#70a8ff_48px)] bg-clip-text text-transparent">GlitchBody</span>
      </section>
      <BodyWindow />
      <MainWindow />
    </main>
  );
}
